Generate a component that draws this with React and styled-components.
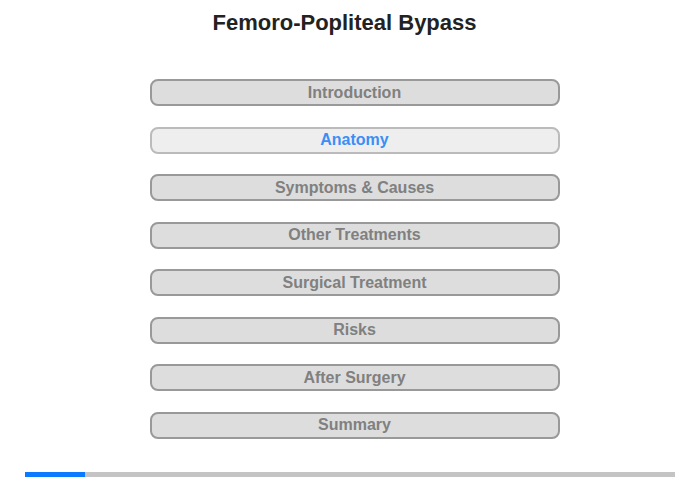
import React, { useState } from "react";
import styled, { createGlobalStyle } from "styled-components";

const GlobalStyle = createGlobalStyle`
  body {
    margin: 0;
    background: #fff;
    font-family: "Liberation Sans", Arial, sans-serif;
  }
`;

const Page = styled.div`
  width: 700px;
  height: 480px;
  display: flex;
  flex-direction: column;
  align-items: center;
`;

const Title = styled.h1`
  margin: 10px 11px 0 0;
  font-size: 22px;
  line-height: 26px;
  font-weight: 700;
  color: #222;
`;

const Menu = styled.div`
  margin: 43px 0 0 9px;
  display: flex;
  flex-direction: column;
  gap: 20.5px;
`;

const Item = styled.div`
  box-sizing: border-box;
  width: 410px;
  height: 27px;
  border: 2px solid ${(p) => (p.active ? "#bbb" : "#999")};
  border-radius: 8px;
  background: ${(p) => (p.active ? "#eee" : "#ddd")};
  color: ${(p) => (p.active ? "#3a8ef5" : "#808080")};
  font-size: 16px;
  font-weight: 700;
  display: flex;
  align-items: center;
  justify-content: center;
  cursor: pointer;
`;

const Progress = styled.div`
  margin-top: 33px;
  width: 650px;
  height: 5px;
  background: #c4c4c4;
  display: flex;
`;

const Fill = styled.div`
  height: 100%;
  background: #0a7bff;
`;

const items = [
  "Introduction",
  "Anatomy",
  "Symptoms & Causes",
  "Other Treatments",
  "Surgical Treatment",
  "Risks",
  "After Surgery",
  "Summary",
];

export default function App() {
  const [active, setActive] = useState(1);
  return (
    <Page>
      <GlobalStyle />
      <Title>Femoro-Popliteal Bypass</Title>
      <Menu>
        {items.map((label, i) => (
          <Item key={label} active={i === active} onClick={() => setActive(i)}>
            {label}
          </Item>
        ))}
      </Menu>
      <Progress>
        <Fill style={{ width: "60px" }} />
      </Progress>
    </Page>
  );
}
